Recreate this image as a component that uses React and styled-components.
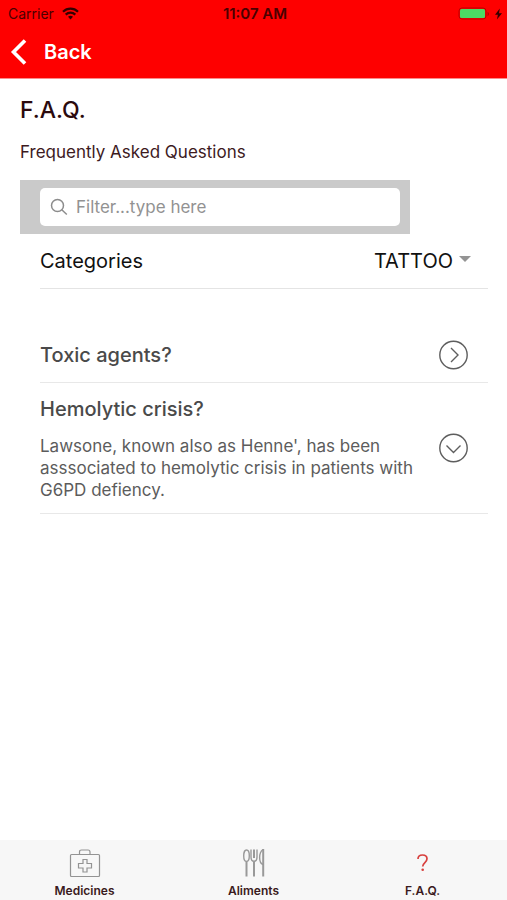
import React, { useState } from 'react'
import styled, { createGlobalStyle } from 'styled-components'

const GlobalStyle = createGlobalStyle`
	* {
		box-sizing: border-box;
	}
	body {
		margin: 0;
		background: #fff;
		color: #111;
		font-family: Inter, 'Liberation Sans', sans-serif;
		font-size: 17px;
	}
	button,
	input,
	select {
		font-family: inherit;
	}
`

const Page = styled.div`
	display: flex;
	flex-direction: column;
	min-height: 100vh;
`

const Header = styled.header`
	background: #fe0000;
	border-bottom: 1px solid #fa8c8c;
`

const StatusBar = styled.div`
	display: grid;
	grid-template-columns: 1fr auto 1fr;
	align-items: center;
	height: 27px;
	padding: 0 5px 0 8px;
	color: #4a0000;
	font-size: 14px;
`

const StatusGroup = styled.div`
	display: flex;
	align-items: center;
	justify-content: ${props => (props.$end ? 'flex-end' : 'flex-start')};
	gap: ${props => (props.$end ? '5px' : '8px')};
`

const Clock = styled.span`
	font-size: 15px;
	font-weight: 600;
`

const BackButton = styled.button`
	display: flex;
	align-items: center;
	gap: 16px;
	height: 51px;
	padding: 0 10px 2px;
	border: 0;
	background: none;
	color: #fff;
	font-size: 20px;
	font-weight: 600;
`

const Main = styled.main`
	flex: 1;
	padding: 17px 19px 16px 20px;
`

const Title = styled.h1`
	margin: 0;
	color: #2b0a0e;
	font-size: 23px;
	font-weight: 500;
	line-height: 28px;
`

const Subtitle = styled.p`
	margin: 16px 0;
	color: #3d1a1e;
	line-height: 24px;
`

const SearchBar = styled.div`
	width: calc(100% * 10 / 12);
	padding: 8px 10px 8px 20px;
	background: #cacaca;
`

const SearchField = styled.label`
	display: flex;
	align-items: center;
	gap: 8px;
	height: 38px;
	padding: 0 10px;
	border-radius: 5px;
	background: #fff;
`

const SearchInput = styled.input`
	flex: 1;
	min-width: 0;
	padding: 0;
	border: 0;
	outline: 0;
	background: none;
	color: #333;
	font-size: 17px;

	&::placeholder {
		color: #929292;
		opacity: 1;
	}
`

const Content = styled.div`
	margin-left: 20px;
`

const CategoryRow = styled.div`
	display: flex;
	align-items: center;
	justify-content: space-between;
	height: 55px;
	padding-right: 17px;
	border-bottom: 1px solid #e4e4e4;
	font-size: 20px;
`

const SelectWrap = styled.div`
	display: flex;
	align-items: center;
	gap: 6px;
`

const CategorySelect = styled.select`
	field-sizing: content;
	appearance: none;
	padding: 0;
	border: 0;
	background: none;
	color: #111;
	font-size: 20px;
`

const Questions = styled.ul`
	margin: 39px 0 0;
	padding: 0;
	list-style: none;
`

const Item = styled.li`
	display: flex;
	align-items: center;
	justify-content: space-between;
	padding: 12px 20px 12px 0;
	border-bottom: 1px solid #e8e8e8;
`

const Question = styled.h2`
	margin: 0;
	color: #4a4a4a;
	font-size: 20px;
	font-weight: 500;
	line-height: 28px;
`

const Answer = styled.p`
	max-width: 376px;
	margin: 12px 0 0;
	color: #5c5c5c;
	line-height: 22px;
`

const ToggleButton = styled.button`
	display: flex;
	flex: none;
	padding: 0;
	border: 0;
	background: none;
`

const TabBar = styled.nav`
	display: grid;
	grid-template-columns: repeat(3, 1fr);
	height: 60px;
	background: #f7f7f7;
`

const Tab = styled.a`
	display: flex;
	flex-direction: column;
	align-items: center;
	gap: 4px;
	padding-top: 7px;
	color: #3a1a20;
	font-size: 12px;
	font-weight: 600;
	line-height: 16px;
	text-decoration: none;
`

const WifiIcon = () => (
	<svg width="17" height="13" viewBox="0 0 17 13" fill="none" stroke="#300" strokeWidth="2.2">
		<path d="M1 4.7C5.2.6 11.8.6 16 4.7" />
		<path d="M3.7 7.6c2.7-2.6 6.9-2.6 9.6 0" />
		<path d="M6 9.8c1.5-1.3 3.5-1.3 5 0L8.5 12.5z" fill="#300" stroke="none" />
	</svg>
)

const BatteryIcon = () => (
	<svg width="32" height="14" viewBox="0 0 32 14">
		<rect x="1" y="1" width="27" height="11" rx="3" fill="none" stroke="#b80000" />
		<rect x="2" y="2" width="25" height="9" rx="1.5" fill="#4cd964" />
		<path d="M29.5 5c2 .5 2 3.5 0 4z" fill="#b80000" />
	</svg>
)

const BoltIcon = () => (
	<svg width="7" height="12" viewBox="0 0 7 12" fill="#300">
		<path d="M4.8.5 0 6.8h2.9L1.9 11.5 7 5.2H4z" />
	</svg>
)

const BackIcon = () => (
	<svg width="18" height="26" viewBox="0 0 18 26" fill="none" stroke="#fff" strokeWidth="3.6">
		<path d="M15 1.5 3.5 13 15 24.5" />
	</svg>
)

const SearchIcon = () => (
	<svg width="18" height="18" viewBox="0 0 18 18" fill="none" stroke="#8c8c8c" strokeWidth="1.5">
		<circle cx="7.5" cy="7.5" r="6" />
		<path d="m11.8 11.8 5 4.7" />
	</svg>
)

const CaretIcon = () => (
	<svg width="12" height="10" viewBox="0 0 12 10" fill="#949494">
		<path d="M0 0h12L6 6z" />
	</svg>
)

const CircleIcon = ({ open }) => (
	<svg width="30" height="30" viewBox="0 0 30 30" fill="none" stroke="#5e5e5e" strokeWidth="1.4">
		<circle cx="15.5" cy="15" r="13.7" />
		<path d={open ? 'm8.500 12.5 7 7 7-7' : 'm13 8 7 7-7 7'} />
	</svg>
)

const MedicineIcon = () => (
	<svg width="32" height="32" viewBox="0 0 32 32" fill="none" stroke="#939393" strokeWidth="1.2">
		<rect x="1.5" y="7.5" width="29" height="22" rx="1" />
		<path d="M10.5 7.5V5q0-2 2-2H19q2 0 2 2v2.5" />
		<path d="M14 12.5h4v4h4.5V21H18v4h-4v-4H9.5v-4.5H14z" />
	</svg>
)

const CutleryIcon = () => (
	<svg width="32" height="32" viewBox="0 0 32 32" fill="none" stroke="#999" strokeWidth="1.4">
		<ellipse cx="8.5" cy="8.7" rx="2.8" ry="5.700" />
		<path d="M13 2.5v7.5c0 2.700 1.200 4.300 3 4.300s3-1.600 3-4.300V2.500" />
		<path d="M16 2.5V11" strokeWidth="2" />
		<path d="M8.500 14.500v15M16 14.500v15" strokeWidth="2" />
		<path d="M25 2.500c-4.500 3-4.500 13.500 0 15" />
		<path d="M25.200 2v27.500" strokeWidth="2" />
	</svg>
)

const QuestionIcon = () => (
	<svg width="32" height="32" viewBox="0 0 32 32" fill="none" stroke="#d8403e" strokeWidth="1.7">
		<path d="M11 12c0-2.5 1.8-4 4.500-4 2.800 0 4.500 1.600 4.500 3.800 0 3.800-4.300 3.700-4.300 7.700" />
		<circle cx="15.700" cy="22.800" r="1.300" fill="#d8403e" stroke="none" />
	</svg>
)

const items = [
	{ question: 'Toxic agents?' },
	{
		question: 'Hemolytic crisis?',
		answer:
			"Lawsone, known also as Henne', has been asssociated to hemolytic crisis in patients with G6PD defiency.",
	},
]

const tabs = [
	{ label: 'Medicines', href: '#medicines', Icon: MedicineIcon },
	{ label: 'Aliments', href: '#aliments', Icon: CutleryIcon },
	{ label: 'F.A.Q.', href: '#faq', Icon: QuestionIcon },
]

const App = () => {
	const [opened, setOpened] = useState(1)

	return (
		<>
			<GlobalStyle />
			<Page>
				<Header>
					<StatusBar>
						<StatusGroup>
							Carrier
							<WifiIcon />
						</StatusGroup>
						<Clock>11:07 AM</Clock>
						<StatusGroup $end>
							<BatteryIcon />
							<BoltIcon />
						</StatusGroup>
					</StatusBar>
					<BackButton type="button">
						<BackIcon />
						Back
					</BackButton>
				</Header>
				<Main>
					<Title>F.A.Q.</Title>
					<Subtitle>Frequently Asked Questions</Subtitle>
					<SearchBar>
						<SearchField>
							<SearchIcon />
							<SearchInput type="text" aria-label="Filter" placeholder="Filter...type here" />
						</SearchField>
					</SearchBar>
					<Content>
						<CategoryRow>
							<label htmlFor="category">Categories</label>
							<SelectWrap>
								<CategorySelect id="category">
									<option>TATTOO</option>
								</CategorySelect>
								<CaretIcon />
							</SelectWrap>
						</CategoryRow>
						<Questions>
							{items.map(({ question, answer }, i) => (
								<Item key={question}>
									<div>
										<Question>{question}</Question>
										{answer && opened === i && <Answer>{answer}</Answer>}
									</div>
									<ToggleButton
										type="button"
										aria-label={question}
										aria-expanded={opened === i}
										onClick={() => setOpened(opened === i ? null : i)}
									>
										<CircleIcon open={opened === i} />
									</ToggleButton>
								</Item>
							))}
						</Questions>
					</Content>
				</Main>
				<TabBar>
					{tabs.map(({ label, href, Icon }) => (
						<Tab key={label} href={href}>
							<Icon />
							{label}
						</Tab>
					))}
				</TabBar>
			</Page>
		</>
	)
}

export default App
